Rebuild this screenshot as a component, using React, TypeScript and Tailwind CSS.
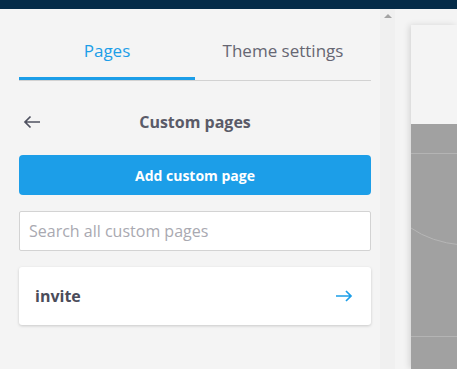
import React, { useState } from 'react';

const BackArrow = () => (
  <svg width="18" height="14" viewBox="0 0 18 14" fill="none" stroke="#4f5160" strokeWidth={1.7}>
    <path d="M17 7H2M7.5 1.5L2 7l5.5 5.5" />
  </svg>
);

const NextArrow = () => (
  <svg width="18" height="12" viewBox="0 0 18 12" fill="none" stroke="#1c9ee8" strokeWidth={1.7}>
    <path d="M1 6h15M11 1l5 5-5 5" />
  </svg>
);

const App: React.FC = () => {
  const [tab, setTab] = useState<'pages' | 'theme'>('pages');
  const [query, setQuery] = useState('');

  return (
    <div className="h-[369px] w-[457px] overflow-hidden flex flex-col bg-[#f4f4f4] font-['Open_Sans',sans-serif]">
      <div className="h-[9px] bg-[#052b48] shrink-0" />
      <div className="flex flex-1 min-h-0">
        {/* sidebar */}
        <div className="w-[380px] shrink-0 pl-[19px] pr-[9px]">
          <div className="flex border-b border-[#d2d2d2]">
            {(['pages', 'theme'] as const).map(t => (
              <button
                key={t}
                onClick={() => setTab(t)}
                className="flex-1 flex flex-col items-center"
              >
                <span className={`pt-[30px] pb-[14px] text-[17px] leading-[24px] ${tab === t ? 'text-[#1c9ee8]' : 'text-[#666672]'}`}>
                  {t === 'pages' ? 'Pages' : 'Theme settings'}
                </span>
                <span className={`h-[3px] w-full ${tab === t ? 'bg-[#1c9ee8]' : 'bg-transparent'}`} />
              </button>
            ))}
          </div>

          <div className="relative flex items-center justify-center mt-[29px] h-[24px]">
            <span className="absolute left-[4px] top-[5px]"><BackArrow /></span>
            <span className="text-[16px] leading-[24px] font-bold text-[#5a5b68]">Custom pages</span>
          </div>

          <button className="mt-[21px] w-full h-[40px] rounded-[4px] bg-[#1c9ee8] text-white text-[14px] font-bold">
            Add custom page
          </button>

          <input
            value={query}
            onChange={e => setQuery(e.target.value)}
            placeholder="Search all custom pages"
            className="mt-[16px] w-full h-[40px] rounded-[2px] border border-[#d3d3d3] bg-white px-[9px] text-[16px] text-[#444] placeholder:text-[#a9a9b1] outline-none"
          />

          <div className="mt-[16px] h-[58px] bg-white rounded-[3px] shadow-[0_1px_3px_rgba(0,0,0,0.18)] flex items-center justify-between pl-[16px] pr-[18px]">
            <span className="text-[16px] font-bold text-[#4b4c5a]">invite</span>
            <NextArrow />
          </div>
        </div>

        {/* scrollbar */}
        <div className="w-[15px] shrink-0 bg-[#f0f0f0] flex justify-center pt-[5px]">
          <div className="w-0 h-0 border-l-[4px] border-r-[4px] border-b-[4px] border-l-transparent border-r-transparent border-b-[#a3a3a3]" />
        </div>

        {/* preview */}
        <div className="flex-1 pl-[16px] pt-[16px]">
          <div className="h-full bg-[#f4f4f4] shadow-[-2px_0_6px_rgba(0,0,0,0.12)] flex flex-col">
            <div className="h-[99px] shrink-0" />
            <div className="flex-1 bg-[#a1a1a1] relative overflow-hidden">
              <div className="absolute left-0 right-0 top-[29px] h-px bg-[#b4b4b4]" />
              <svg className="absolute left-0 top-[100px]" width="50" height="30" viewBox="0 0 50 30" fill="none">
                <path d="M0 4 Q20 18 50 21" stroke="#b6b6b6" strokeWidth="1" />
              </svg>
              <div className="absolute left-0 right-0 top-[212px] h-px bg-[#b4b4b4]" />
            </div>
          </div>
        </div>
      </div>
    </div>
  );
};

export default App;
